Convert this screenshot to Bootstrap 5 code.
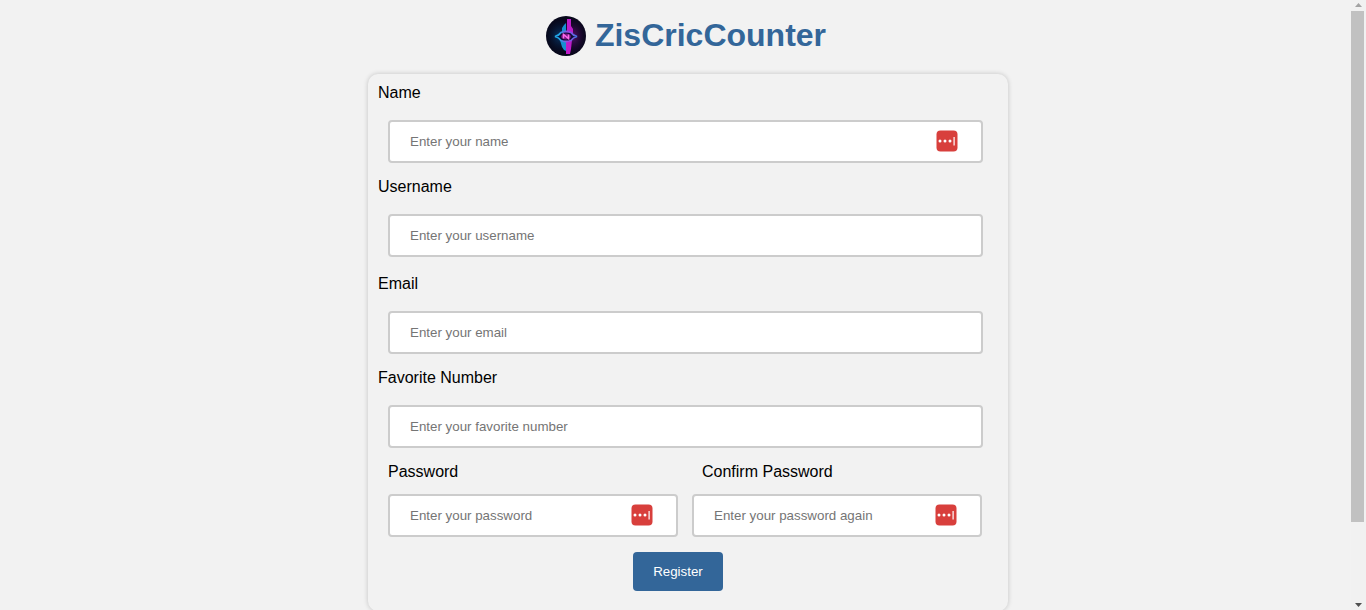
<!DOCTYPE html>
<html lang="en">
<head>
<meta charset="utf-8">
<meta name="viewport" content="width=device-width, initial-scale=1">
<title>ZisCricCounter</title>
<link href="https://cdn.jsdelivr.net/npm/bootstrap@5.3.0/dist/css/bootstrap.min.css" rel="stylesheet">
<style>
  body { font-family: "Liberation Sans", Arial, sans-serif; font-size: 16px; line-height: 18px; color: #000; background: #f2f2f2; }
  .page { padding: 16px 0 0 25px; }
  .brand { gap: 9px; height: 40px; margin-bottom: 18px; }
  .brand h1 { font-size: 32px; line-height: 38px; font-weight: 700; color: #336699; }
  .signup { width: 100%; max-width: 640px; padding: 10px 10px 20px; border-radius: 10px; box-shadow: 0 0 5px rgba(0, 0, 0, .2); }
  .field { margin-bottom: 15px; }
  .field.spaced { margin-bottom: 18px; }
  .field .input-wrap { margin: 18px 15px 0 10px; }
  .pair { gap: 14px; margin: 0 16px 15px 10px; }
  .pair .input-wrap { margin-top: 13px; }
  .pair .indent { padding-left: 10px; }
  .signup .form-control { height: 43px; padding: 0 20px; border: 2px solid #ccc; border-radius: 4px; background: #fff; font-size: revert; }
  .signup .form-control::placeholder { color: #757575; }
  .key-icon { top: 10px; right: 25px; width: 22px; height: 22px; }
  .actions { padding-right: 20px; }
  .register { height: 39px; padding: 0 20px; border: 0; border-radius: 4px; background: #336699; color: #fff; font-size: revert; }
  .register:hover { background: #2a5580; color: #fff; }
  .scroll-track { width: 15px; padding: 3px 2px 3px 0; background: #f1f1f1; }
  .scroll-thumb { width: 13px; height: 511px; max-height: 85%; margin-top: 4px; background: #c1c1c1; }
</style>
</head>
<body class="vh-100 overflow-hidden d-flex">
<svg class="d-none" aria-hidden="true">
  <symbol id="key" viewBox="0 0 22 22">
    <rect x=".5" y=".5" width="21" height="21" rx="4" fill="#d83f3c"/>
    <g fill="#fff"><circle cx="4" cy="11" r="1.500"/><circle cx="9" cy="11" r="1.500"/><circle cx="14" cy="11" r="1.500"/><rect x="17.500" y="7" width="1.200" height="8.500"/></g>
  </symbol>
</svg>
<main class="page flex-grow-1 d-flex flex-column align-items-center">
  <header class="brand d-flex align-items-start me-1 flex-shrink-0">
    <svg width="40" height="40" viewBox="0 0 40 40" role="img" aria-label="Logo">
      <defs>
        <clipPath id="disc"><circle cx="20" cy="20" r="20"/></clipPath>
        <radialGradient id="glowBlue"><stop offset="0" stop-color="#0858a0" stop-opacity=".6"/><stop offset="1" stop-color="#041a3a" stop-opacity="0"/></radialGradient>
        <radialGradient id="glowPink"><stop offset="0" stop-color="#8a13a0" stop-opacity=".6"/><stop offset="1" stop-color="#300846" stop-opacity="0"/></radialGradient>
        <linearGradient id="eye"><stop offset=".2" stop-color="#20a8e8"/><stop offset=".6" stop-color="#a040e0"/><stop offset="1" stop-color="#3c7ae8"/></linearGradient>
        <filter id="soft" x="-20%" y="-20%" width="140%" height="140%"><feGaussianBlur stdDeviation=".6"/></filter>
      </defs>
      <g clip-path="url(#disc)">
        <rect width="40" height="40" fill="#07071a"/>
        <ellipse cx="14" cy="20" rx="15" ry="18" fill="url(#glowBlue)"/>
        <ellipse cx="27" cy="20" rx="14" ry="19" fill="url(#glowPink)"/>
        <g filter="url(#soft)">
          <path d="M20 7l-2 2-2 3v5l4 1zM14 24l2 7 2 3 2 1V24z" fill="#168fd0"/>
          <path d="M21 3h4v7l2 3v4h-6zM20 24h6l-1 9-1 5h-4z" fill="#bd1bc9"/>
          <path d="M9 20.500q4-1 6-4 5-2 10 0 2 3 6 4-4 1-6 4-5 2-10 0-2-3-6-4z" fill="#100c34" stroke="url(#eye)" stroke-width="1.800"/>
          <ellipse cx="20" cy="20.500" rx="5" ry="3" fill="#74127f"/>
        </g>
        <path d="M17.500 22.500v-4l5 4v-4" fill="none" stroke="#fb69e7" stroke-width="1.600"/>
      </g>
    </svg>
    <h1 class="m-0">ZisCricCounter</h1>
  </header>

  <form class="signup flex-shrink-0">
    <div class="field">
      <label class="d-block" for="name">Name</label>
      <div class="input-wrap position-relative">
        <input class="form-control" type="text" id="name" placeholder="Enter your name">
        <svg class="key-icon position-absolute" aria-hidden="true"><use href="#key"/></svg>
      </div>
    </div>
    <div class="field spaced">
      <label class="d-block" for="username">Username</label>
      <div class="input-wrap"><input class="form-control" type="text" id="username" placeholder="Enter your username"></div>
    </div>
    <div class="field">
      <label class="d-block" for="email">Email</label>
      <div class="input-wrap"><input class="form-control" type="email" id="email" placeholder="Enter your email"></div>
    </div>
    <div class="field">
      <label class="d-block" for="favorite">Favorite Number</label>
      <div class="input-wrap"><input class="form-control" type="text" inputmode="numeric" id="favorite" placeholder="Enter your favorite number"></div>
    </div>
    <div class="pair d-flex">
      <div class="flex-fill">
        <label class="d-block" for="password">Password</label>
        <div class="input-wrap position-relative">
          <input class="form-control" type="password" id="password" placeholder="Enter your password">
          <svg class="key-icon position-absolute" aria-hidden="true"><use href="#key"/></svg>
        </div>
      </div>
      <div class="flex-fill">
        <label class="indent d-block" for="confirm">Confirm Password</label>
        <div class="input-wrap position-relative">
          <input class="form-control" type="password" id="confirm" placeholder="Enter your password again">
          <svg class="key-icon position-absolute" aria-hidden="true"><use href="#key"/></svg>
        </div>
      </div>
    </div>
    <div class="actions d-flex justify-content-center">
      <button class="btn register" type="submit">Register</button>
    </div>
  </form>
</main>
<aside class="scroll-track d-flex flex-column flex-shrink-0 vh-100" aria-hidden="true">
  <svg class="flex-shrink-0 ms-1" width="7" height="4" viewBox="0 0 7 4"><path d="M0 4h7L3.500 0z" fill="#a3a3a3"/></svg>
  <div class="scroll-thumb flex-shrink-0"></div>
  <svg class="flex-shrink-0 ms-1 mt-auto" width="7" height="4" viewBox="0 0 7 4"><path d="M0 0h7L3.500 4z" fill="#505050"/></svg>
</aside>
<script src="https://cdn.jsdelivr.net/npm/bootstrap@5.3.0/dist/js/bootstrap.bundle.min.js"></script>
</body>
</html>
